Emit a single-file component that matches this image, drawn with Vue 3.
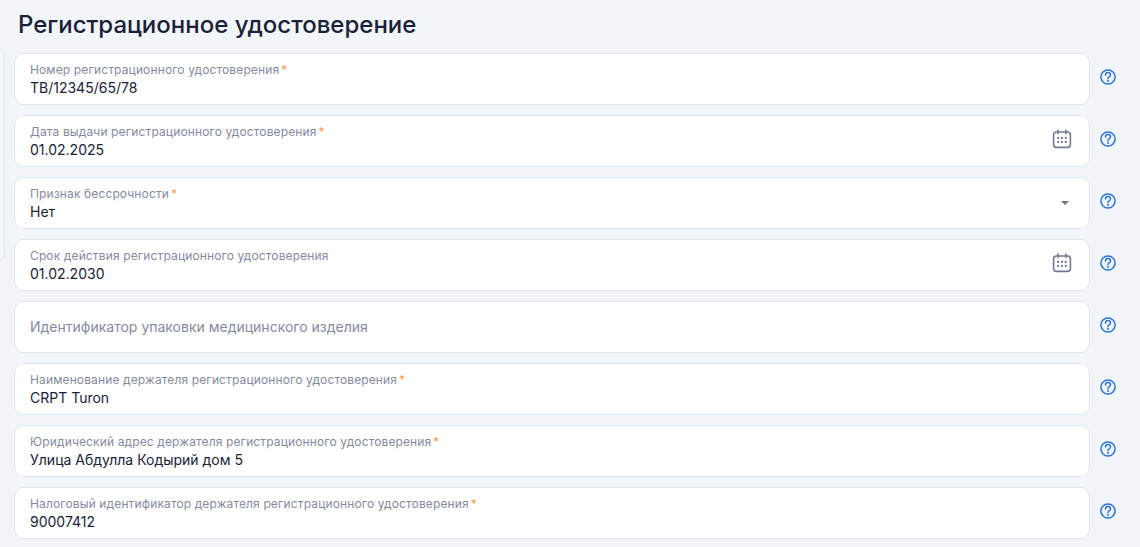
<template>
  <div class="page">
    <aside class="side-card"></aside>
    <main class="content">
      <h1 class="title">Регистрационное удостоверение</h1>
      <div class="form">
        <div v-for="field in fields" :key="field.label" class="row">
          <div class="field" :class="{ empty: !field.value }">
            <div class="field-text">
              <label class="field-label">{{ field.label }}<span v-if="field.required" class="req">*</span></label>
              <div v-if="field.value" class="field-value">{{ field.value }}</div>
            </div>
            <svg v-if="field.type === 'date'" class="cal" width="20" height="20" viewBox="0 0 20 20" fill="none" stroke="#737b94" stroke-width="1.6">
              <rect x="1.6" y="3" width="16.8" height="15.4" rx="2.8" />
              <path d="M6 1v3.4M14 1v3.4" stroke-linecap="round" />
              <g fill="#737b94" stroke="none">
                <circle cx="6.2" cy="9" r="1.15" /><circle cx="10" cy="9" r="1.15" /><circle cx="13.8" cy="9" r="1.15" />
                <circle cx="6.2" cy="13" r="1.15" /><circle cx="10" cy="13" r="1.15" /><circle cx="13.8" cy="13" r="1.15" />
              </g>
            </svg>
            <span v-else-if="field.type === 'select'" class="caret"></span>
          </div>
          <svg class="help" width="16" height="16" viewBox="0 0 16 16" fill="none" stroke="#2f74d8" stroke-width="1.5">
            <circle cx="8" cy="8" r="7.1" />
            <path d="M5.5 6c0-1.5 1.1-2.4 2.5-2.4s2.5.9 2.5 2.2c0 1.1-.7 1.6-1.4 2-.7.4-1.1.9-1.1 1.7v.2" stroke-linecap="round" />
            <circle cx="8" cy="12.1" r="1" fill="#2f74d8" stroke="none" />
          </svg>
        </div>
      </div>
    </main>
  </div>
</template>

<script setup>
const fields = [
  { label: 'Номер регистрационного удостоверения', value: 'ТВ/12345/65/78', required: true },
  { label: 'Дата выдачи регистрационного удостоверения', value: '01.02.2025', required: true, type: 'date' },
  { label: 'Признак бессрочности', value: 'Нет', required: true, type: 'select' },
  { label: 'Срок действия регистрационного удостоверения', value: '01.02.2030', type: 'date' },
  { label: 'Идентификатор упаковки медицинского изделия', value: '' },
  { label: 'Наименование держателя регистрационного удостоверения', value: 'CRPT Turon', required: true },
  { label: 'Юридический адрес держателя регистрационного удостоверения', value: 'Улица Абдулла Кодырий дом 5', required: true },
  { label: 'Налоговый идентификатор держателя регистрационного удостоверения', value: '90007412', required: true }
]
</script>

<style>
html, body {
  margin: 0;
  background: #f2f5f9;
  overflow: hidden;
}
</style>

<style scoped>
.page {
  display: flex;
  height: 547px;
  font-family: Inter, "Noto Sans", sans-serif;
  background: #f2f5f9;
  overflow: hidden;
}

.side-card {
  flex-shrink: 0;
  box-sizing: border-box;
  width: 25px;
  height: 216px;
  margin: 47px 9px 0 -20px;
  border: 1px solid #dfe6f3;
  border-radius: 10px;
  background: #f2f5f9;
}

.content {
  flex: 1;
  min-width: 0;
  padding-right: 24px;
}

.title {
  margin: 0 0 13px 4px;
  height: 40px;
  line-height: 50px;
  font-size: 24px;
  font-weight: 500;
  color: #1a2138;
}

.form {
  display: flex;
  flex-direction: column;
  gap: 10px;
}

.row {
  display: flex;
  align-items: center;
  gap: 10px;
}

.field {
  flex: 1;
  box-sizing: border-box;
  height: 52px;
  padding: 0 15px;
  display: flex;
  align-items: center;
  justify-content: space-between;
  background: #fff;
  border: 1px solid #dfe6f3;
  border-radius: 10px;
}

.field-text {
  padding-top: 2px;
}

.field-label {
  display: block;
  font-size: 12px;
  line-height: 16px;
  letter-spacing: 0.13px;
  color: #868a9f;
}

.req {
  margin-left: 2px;
  color: #f59c55;
}

.field-value {
  font-size: 14px;
  line-height: 20px;
  color: #1a2138;
}

.field.empty .field-text {
  padding-top: 0;
}

.field.empty .field-label {
  font-size: 14px;
  line-height: 20px;
  letter-spacing: 0;
}

.cal {
  margin: 0 2px 4px 0;
}

.caret {
  width: 0;
  height: 0;
  margin-right: 5px;
  border-left: 4.5px solid transparent;
  border-right: 4.5px solid transparent;
  border-top: 4.5px solid #70747f;
}

.help {
  flex-shrink: 0;
  margin-bottom: 4px;
}
</style>
